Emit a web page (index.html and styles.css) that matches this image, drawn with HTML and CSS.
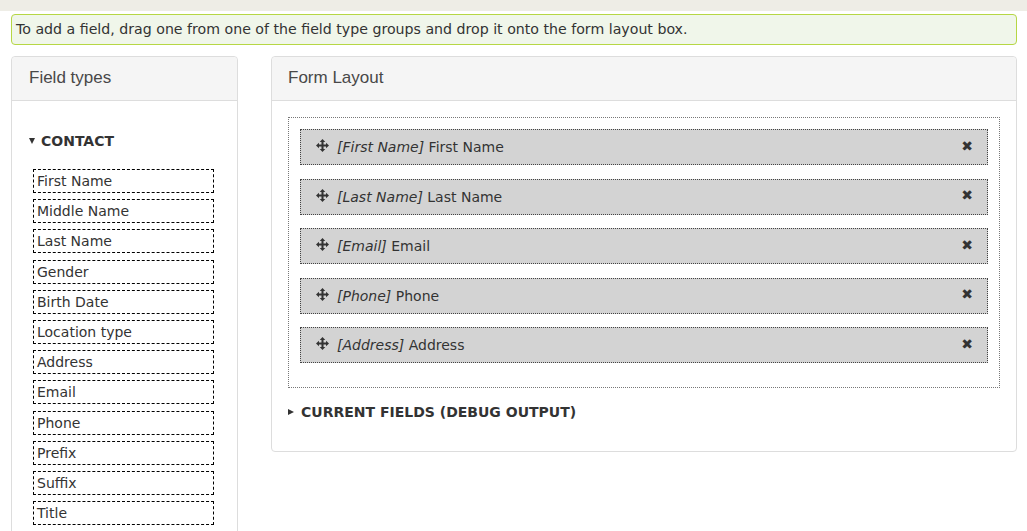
FILE: index.html
```html
<!DOCTYPE html>
<html>
<head>
<meta charset="utf-8">
<link rel="stylesheet" href="styles.css">
</head>
<body>
<div class="topband"></div>
<div class="page">
  <div class="message">To add a field, drag one from one of the field type groups and drop it onto the form layout box.</div>
  <div class="columns">
    <section class="panel panel-types">
      <div class="panel-heading">Field types</div>
      <div class="panel-body">
        <div class="group-title"><span class="tri-down"></span>CONTACT</div>
        <ul class="type-list">
          <li>First Name</li>
          <li>Middle Name</li>
          <li>Last Name</li>
          <li>Gender</li>
          <li>Birth Date</li>
          <li>Location type</li>
          <li>Address</li>
          <li>Email</li>
          <li>Phone</li>
          <li>Prefix</li>
          <li>Suffix</li>
          <li>Title</li>
        </ul>
      </div>
    </section>
    <section class="panel panel-layout">
      <div class="panel-heading">Form Layout</div>
      <div class="panel-body">
        <div class="dropbox">
          <div class="field-row">
            <svg class="move" viewBox="0 0 14 14"><path d="M7 0 L10 3.2 H8.1 V5.9 H10.8 V4 L14 7 L10.8 10 V8.1 H8.1 V10.8 H10 L7 14 L4 10.8 H5.9 V8.1 H3.2 V10 L0 7 L3.2 4 V5.9 H5.9 V3.2 H4 Z"/></svg>
            <span class="label"><em>[First Name]</em> First Name</span>
            <span class="remove">&#10006;</span>
          </div>
          <div class="field-row">
            <svg class="move" viewBox="0 0 14 14"><path d="M7 0 L10 3.2 H8.1 V5.9 H10.8 V4 L14 7 L10.8 10 V8.1 H8.1 V10.8 H10 L7 14 L4 10.8 H5.9 V8.1 H3.2 V10 L0 7 L3.2 4 V5.9 H5.9 V3.2 H4 Z"/></svg>
            <span class="label"><em>[Last Name]</em> Last Name</span>
            <span class="remove">&#10006;</span>
          </div>
          <div class="field-row">
            <svg class="move" viewBox="0 0 14 14"><path d="M7 0 L10 3.2 H8.1 V5.9 H10.8 V4 L14 7 L10.8 10 V8.1 H8.1 V10.8 H10 L7 14 L4 10.8 H5.9 V8.1 H3.2 V10 L0 7 L3.2 4 V5.9 H5.9 V3.2 H4 Z"/></svg>
            <span class="label"><em>[Email]</em> Email</span>
            <span class="remove">&#10006;</span>
          </div>
          <div class="field-row">
            <svg class="move" viewBox="0 0 14 14"><path d="M7 0 L10 3.2 H8.1 V5.9 H10.8 V4 L14 7 L10.8 10 V8.1 H8.1 V10.8 H10 L7 14 L4 10.8 H5.9 V8.1 H3.2 V10 L0 7 L3.2 4 V5.9 H5.9 V3.2 H4 Z"/></svg>
            <span class="label"><em>[Phone]</em> Phone</span>
            <span class="remove">&#10006;</span>
          </div>
          <div class="field-row">
            <svg class="move" viewBox="0 0 14 14"><path d="M7 0 L10 3.2 H8.1 V5.9 H10.8 V4 L14 7 L10.8 10 V8.1 H8.1 V10.8 H10 L7 14 L4 10.8 H5.9 V8.1 H3.2 V10 L0 7 L3.2 4 V5.9 H5.9 V3.2 H4 Z"/></svg>
            <span class="label"><em>[Address]</em> Address</span>
            <span class="remove">&#10006;</span>
          </div>
        </div>
        <div class="debug-title"><span class="tri-right"></span>CURRENT FIELDS (DEBUG OUTPUT)</div>
      </div>
    </section>
  </div>
</div>
</body>
</html>
```

FILE: styles.css
```css
html, body {
  margin: 0;
  padding: 0;
  background: #fff;
}
body {
  font-family: "DejaVu Sans", sans-serif;
  font-size: 14px;
  color: #333;
  overflow: hidden;
  height: 531px;
}
.topband {
  height: 11px;
  background: #eeede6;
}
.page {
  padding: 3px 10px 0 11px;
}
.message {
  height: 29px;
  line-height: 29px;
  border: 1px solid #b6d744;
  border-radius: 4px;
  background: #f0f6ea;
  padding: 0 4px;
  font-size: 14.17px;
  color: #333;
}
.columns {
  display: flex;
  align-items: flex-start;
  gap: 33px;
  margin-top: 11px;
}
.panel {
  border: 1px solid #ddd;
  border-radius: 4px;
  background: #fff;
}
.panel-types {
  width: 225px;
  flex: none;
  min-height: 600px;
}
.panel-layout {
  flex: 1;
}
.panel-heading {
  height: 43px;
  line-height: 42px;
  background: #f5f5f5;
  border-bottom: 1px solid #ddd;
  border-radius: 4px 4px 0 0;
  padding: 0 17px 0 16px;
  font-family: "Liberation Sans", Arial, sans-serif;
  font-size: 17px;
  color: #484848;
}
.panel-types .panel-heading {
  padding-left: 17px;
}
.panel-types .panel-body {
  padding: 30px 17px 20px 17px;
}
.group-title {
  font-weight: bold;
  height: 20px;
  line-height: 20px;
  display: flex;
  align-items: center;
}
.tri-down {
  display: inline-block;
  width: 0;
  height: 0;
  border-left: 3px solid transparent;
  border-right: 3px solid transparent;
  border-top: 6px solid #333;
  margin: 0 6px 0 0;
}
.tri-right {
  display: inline-block;
  width: 0;
  height: 0;
  border-top: 3.5px solid transparent;
  border-bottom: 3.5px solid transparent;
  border-left: 6px solid #333;
  margin: 0 7px 0 0;
}
.type-list {
  list-style: none;
  margin: 18px 0 0 4px;
  padding: 0;
  display: flex;
  flex-direction: column;
  gap: 6.2px;
}
.type-list li {
  width: 176px;
  height: 22px;
  line-height: 22px;
  border: 1px dashed #000;
  padding: 0 0 0 3px;
  color: #333;
}
.panel-layout .panel-body {
  padding: 16px 16px 29px 16px;
}
.dropbox {
  border: 1px dotted #777;
  padding: 11px 11px 24px 11px;
  display: flex;
  flex-direction: column;
  gap: 13.5px;
}
.field-row {
  height: 34px;
  border: 1px dotted #444;
  background: #d3d3d3;
  display: flex;
  align-items: center;
  padding: 0 14px 0 15px;
}
.move {
  width: 13px;
  height: 13px;
  fill: #333;
  margin: -3px 8px 0 0;
  flex: none;
}
.label {
  flex: 1;
}
.label em {
  font-style: italic;
}
.remove {
  font-size: 14px;
  font-weight: bold;
  color: #333;
  margin-top: -3px;
}
.debug-title {
  margin-top: 14px;
  height: 20px;
  line-height: 20px;
  font-weight: bold;
  display: flex;
  align-items: center;
}
```
